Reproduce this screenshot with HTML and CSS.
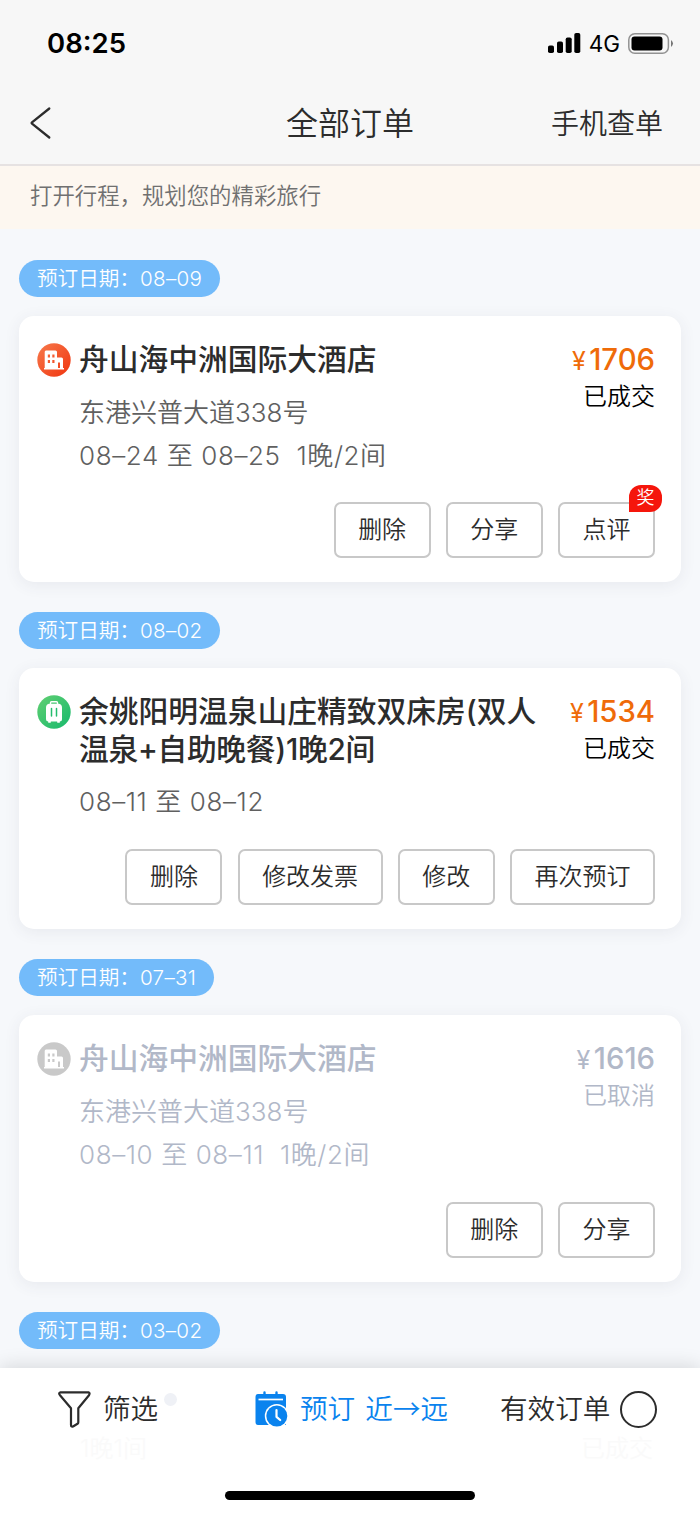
FILE: index.html
```html
<!DOCTYPE html>
<html lang="zh-CN">
<head>
<meta charset="utf-8">
<title>全部订单</title>
<link rel="stylesheet" href="styles.css">
</head>
<body>
<svg class="defs" width="0" height="0">
  <defs>
    <linearGradient id="red" x1="0" y1="0" x2="1" y2="1"><stop offset="0" stop-color="#f77a4c"/><stop offset="1" stop-color="#f0340f"/></linearGradient>
    <linearGradient id="green" x1="0" y1="0" x2="1" y2="1"><stop offset="0" stop-color="#62cf72"/><stop offset="1" stop-color="#16b96c"/></linearGradient>
    <symbol id="hotel" viewBox="0 0 34 34">
      <circle cx="17" cy="17" r="16.700"/>
      <path fill="#fff" fill-rule="evenodd" d="M9 7.500H18.500Q20 7.500 20 9V14.500H24.500Q26 14.500 26 16V25H27V26.500H7V25H7.700V9Q7.700 7.500 9 7.500ZM10.800 11.500V14.500H13V11.500ZM15.300 11.500V14.500H17.500V11.500ZM10.800 17V20H13V17ZM15.300 17V20H17.500V17ZM21 19.500V25H23V19.500Z"/>
    </symbol>
  </defs>
</svg>
<div class="screen">
  <header class="header">
    <div class="status">
      <span class="clock">08:25</span>
      <div class="signals">
        <svg width="33" height="20" viewBox="0 0 33 20"><rect x="0" y="12.500" width="6" height="7.500" rx="1.800"/><rect x="9" y="8.500" width="6" height="11.500" rx="1.800"/><rect x="17.700" y="4.500" width="6" height="15.500" rx="1.800"/><rect x="26.300" y="0" width="6" height="20" rx="1.800"/></svg>
        <span class="net">4G</span>
        <svg width="46" height="21" viewBox="0 0 46 21"><rect x=".8" y=".8" width="39.600" height="19.400" rx="6" fill="none" stroke="#929292" stroke-width="1.500"/><rect x="3.500" y="3.500" width="31" height="14" rx="3"/><path d="M43 7Q47 10.500 43 14Z" fill="#777"/></svg>
      </div>
    </div>
    <nav class="nav">
      <svg class="back" width="24" height="34" viewBox="0 0 24 34"><path d="M20.300 2.500 3 16.300Q2.200 17 3 17.700L20.300 31.500" fill="none" stroke="#2c2c2c" stroke-width="2.300" stroke-linecap="round"/></svg>
      <h1 class="nav-title">全部订单</h1>
      <span class="lookup">手机查单</span>
    </nav>
  </header>
  <div class="banner">打开行程，规划您的精彩旅行</div>

  <main class="orders">
    <div class="pill">预订日期：<span class="num">08–09</span></div>
    <section class="card">
      <div class="top">
        <svg class="kind" fill="url(#red)"><use href="#hotel"/></svg>
        <div class="info">
          <h2 class="name">舟山海中洲国际大酒店</h2>
          <p class="line">东港兴普大道338号</p>
          <p class="line dates">08–24 至 08–25&nbsp; 1晚/2间</p>
        </div>
        <div class="side"><div class="price"><span class="yen">¥</span>1706</div><div class="state">已成交</div></div>
      </div>
      <div class="actions"><span class="btn">删除</span><span class="btn">分享</span><span class="btn">点评<i class="badge">奖</i></span></div>
    </section>

    <div class="pill">预订日期：<span class="num">08–02</span></div>
    <section class="card card-mid">
      <div class="top">
        <svg class="kind" viewBox="0 0 34 34"><circle cx="17" cy="17" r="16.700" fill="url(#green)"/><path fill="none" stroke="#fff" stroke-width="1.400" d="M13.500 10V7.800Q13.500 6.800 14.500 6.800H19.500Q20.500 6.800 20.500 7.800V10"/><path fill="#fff" d="M12 8.700H22Q25 9.500 25 12.500V24Q25 26.500 22.500 26.500H11.500Q9 26.500 9 24V12.500Q9 9.500 12 8.700Z"/><rect x="11" y="26" width="3" height="1.800" rx=".8" fill="#fff"/><rect x="20" y="26" width="3" height="1.800" rx=".8" fill="#fff"/><path stroke="#25bd6d" stroke-width="1.500" stroke-linecap="round" d="M14.500 13.500V21M19.500 13.500V21"/></svg>
        <div class="info">
          <h2 class="name">余姚阳明温泉山庄精致双床房(双人<br><span class="tight">温泉+自助晚餐)1晚2间</span></h2>
          <p class="line dates">08–11 至 08–12</p>
        </div>
        <div class="side"><div class="price"><span class="yen">¥</span>1534</div><div class="state">已成交</div></div>
      </div>
      <div class="actions"><span class="btn">删除</span><span class="btn">修改发票</span><span class="btn">修改</span><span class="btn">再次预订</span></div>
    </section>

    <div class="pill">预订日期：<span class="num">07–31</span></div>
    <section class="card card-off">
      <div class="top">
        <svg class="kind" fill="#c9c9c9"><use href="#hotel"/></svg>
        <div class="info">
          <h2 class="name">舟山海中洲国际大酒店</h2>
          <p class="line">东港兴普大道338号</p>
          <p class="line dates">08–10 至 08–11&nbsp; 1晚/2间</p>
        </div>
        <div class="side"><div class="price"><span class="yen">¥</span>1616</div><div class="state">已取消</div></div>
      </div>
      <div class="actions"><span class="btn">删除</span><span class="btn">分享</span></div>
    </section>

    <div class="pill">预订日期：<span class="num">03–02</span></div>
  </main>

  <footer class="footer">
    <div class="tabs">
      <div class="tab filter">
        <svg width="33" height="37" viewBox="0 0 33 37"><path d="M2.500 1.300H30.500Q32.300 1.800 31 4.200L20.300 17.300V31.200Q20.300 32.200 19.500 32.800L15 35.500Q13 36.200 13 34V17.300L2 4.200Q.2 1.800 2.500 1.300Z" fill="none" stroke="#2c2c2c" stroke-width="2.200" stroke-linejoin="round"/></svg>
        <span>筛选</span><i class="dot"></i>
      </div>
      <div class="tab sort">
        <svg width="33" height="36" viewBox="0 0 33 36"><path fill="#0a83ee" d="M3 3H28Q31 3 31 6V34H3Q.5 34 .5 31V6Q.5 3 3 3Z"/><path stroke="#0a83ee" stroke-width="2.400" stroke-linecap="round" d="M9.500 1.500V4M21.500 1.500V4"/><path stroke="#fff" stroke-width="1.700" d="M3.500 8.500H28"/><circle cx="21.800" cy="25" r="12" fill="#fff"/><circle cx="21.800" cy="25" r="10.500" fill="#0a83ee"/><path fill="none" stroke="#fff" stroke-width="2.200" stroke-linecap="round" stroke-linejoin="round" d="M21.500 19V25.800L25.200 29"/></svg>
        <span>预订 近→远</span>
      </div>
      <div class="tab valid"><span>有效订单</span><i class="radio"></i></div>
    </div>
    <div class="home"></div>
    <div class="ghost"><span>1晚1间</span><span>已成交</span></div>
  </footer>
</div>
</body>
</html>
```
FILE: styles.css
```css
* { box-sizing: border-box; }
body { margin: 0; background: #f6f8fb; color: #2c2c2c; font-family: Inter, "Noto Sans CJK SC", sans-serif; font-weight: 350; }
h1, h2, p { margin: 0; font-weight: inherit; }
i { font-style: normal; }
.defs { position: absolute; }
.screen { position: relative; width: 700px; height: 1515px; overflow: hidden; background: #f6f8fb; }

.header { height: 166px; background: #f7f7f7; border-bottom: 2px solid #e6e2e2; }
.status { display: flex; justify-content: space-between; align-items: center; height: 84px; padding: 2px 26px 0 47px; }
.clock { font-size: 27.500px; font-weight: 600; color: #000; }
.signals { display: flex; align-items: center; }
.net { margin: 1px 8px 0 8px; font-size: 22.500px; line-height: 24px; font-weight: 400; color: #000; }
.nav { display: grid; grid-template-columns: 112px 1fr 112px; align-items: center; height: 80px; padding: 0 37px 0 29px; }
.nav-title { margin-left: 8px; font-size: 32px; line-height: 40px; text-align: center; }
.lookup { justify-self: end; font-size: 28px; line-height: 40px; white-space: nowrap; }
.back { margin-top: -2px; }
.banner { height: 63px; padding-left: 30px; background: #fdf7f0; color: #707070; font-size: 22.400px; line-height: 60px; }

.orders { padding: 31px 19px 0; }
.pill { width: fit-content; height: 37px; margin-bottom: 19px; padding: 0 18px; border-radius: 19px; background: #73bbfa; color: #fff; font-size: 20.600px; line-height: 37px; }
.num { letter-spacing: .3px; font-weight: 300; }
.card { display: flex; flex-direction: column; justify-content: space-between; height: 266px; margin-bottom: 30px; padding: 25px 26px 24px 18px; border-radius: 15px; background: #fff; box-shadow: 0 3px 16px rgba(60, 70, 85, .08); }
.card-mid { height: 261px; }
.card-off { height: 267px; }
.top { display: flex; }
.kind { flex: none; width: 34px; height: 34px; margin-top: 2px; }
.info { flex: 1; margin-left: 8px; }
.name { margin-bottom: 12px; font-size: 29.750px; line-height: 37.500px; font-weight: 500; white-space: nowrap; }
.tight { letter-spacing: -.3px; }
.line { height: 43px; color: #606060; font-size: 26px; line-height: 43px; white-space: nowrap; }
.dates { letter-spacing: .6px; }
.side { text-align: right; }
.price { color: #ef6b09; font-size: 29.300px; line-height: 37px; font-weight: 500; }
.yen { margin-right: 3.500px; font-size: 25px; font-weight: 400; }
.state { color: #000; font-size: 24px; line-height: 34px; }
.card-off .name, .card-off .line, .card-off .price, .card-off .state { color: #b1b8c8; }
.actions { display: flex; justify-content: flex-end; gap: 15.200px; }
.btn { position: relative; height: 56px; padding: 0 22.500px; border: 2px solid #c8c8c8; border-radius: 7px; font-size: 24px; line-height: 51px; }
.badge { position: absolute; top: -19px; right: -9px; width: 33px; height: 27px; border-radius: 12px 12px 12px 0; background: #f5160c; color: #fff; font-size: 18px; line-height: 26px; text-align: center; }

.footer { position: absolute; left: 0; right: 0; bottom: 0; height: 147px; background: #fff; box-shadow: 0 -2px 18px rgba(0, 0, 0, .13); }
.tabs { display: grid; grid-template-columns: 197px 245px auto; align-items: center; height: 82px; padding: 0 0 0 58px; font-size: 27.600px; line-height: 40px; }
.tab { position: relative; display: flex; align-items: center; gap: 12px; }
.filter { width: fit-content; }
.dot { position: absolute; right: -19px; top: 4px; width: 13px; height: 13px; border-radius: 50%; background: #eff1f6; }
.sort { color: #0a83ee; }
.sort span { font-family: "Noto Sans CJK SC", sans-serif; word-spacing: 4px; margin-top: -4px; }
.valid { gap: 10px; }
.radio { width: 37px; height: 37px; border: 2.500px solid #2c2c2c; border-radius: 50%; }
.home { position: absolute; left: 225px; top: 123px; width: 250px; height: 9px; border-radius: 5px; background: #000; }
.ghost { display: flex; justify-content: space-between; margin-top: -18px; padding: 0 47px 0 80px; color: #fafafa; font-size: 24px; line-height: 34px; }
```
